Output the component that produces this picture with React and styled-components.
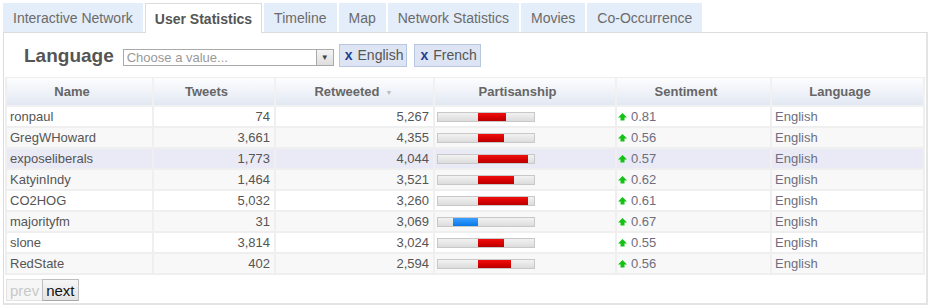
import React from "react";
import styled, { createGlobalStyle } from "styled-components";

const Global = createGlobalStyle`
  html, body { margin: 0; padding: 0; background: #fff; }
  body { font-family: "Liberation Sans", Arial, sans-serif; }
`;

const Page = styled.div`
  padding: 3px 4px 0 3px;
  width: 925px;
`;

const TabBar = styled.div`
  display: flex;
  gap: 2px;
  height: 29px;
`;

const Tab = styled.div`
  box-sizing: border-box;
  padding: 0 9px 0 9px;
  display: flex;
  align-items: center;
  font-size: 14px;
  color: ${(p) => (p.$active ? "#555" : "#6b6b6b")};
  font-weight: ${(p) => (p.$active ? "bold" : "normal")};
  background: ${(p) => (p.$active ? "#fff" : "#e4edfa")};
  border: 1px solid ${(p) => (p.$active ? "#dcdcdc" : "#e4edfa")};
  border-bottom: none;
  position: relative;
  z-index: 1;
  height: ${(p) => (p.$active ? "30px" : "29px")};
`;

const Panel = styled.div`
  border: 1px solid #dcdcdc;
  border-right: 2px solid #e4e4e4;
  border-bottom: 2px solid #e4e4e4;
  height: 273px;
  box-sizing: border-box;
  padding: 0 2px 0 1px;
`;

const FilterRow = styled.div`
  display: flex;
  align-items: center;
  height: 24px;
  margin-top: 10px;
  padding-left: 19px;
`;

const Label = styled.div`
  font-size: 19px;
  font-weight: bold;
  color: #555;
  margin-right: 9px;
  margin-top: 1px;
`;

const Select = styled.div`
  width: 211px;
  height: 17px;
  box-sizing: border-box;
  border: 1px solid #aaa;
  display: flex;
  align-items: center;
  font-size: 13px;
  color: #999;
  margin-top: 4px;
  background: #fff;
`;

const Placeholder = styled.span`
  flex: 1;
  padding-left: 3px;
  white-space: nowrap;
`;

const SelectArrow = styled.span`
  width: 16px;
  height: 15px;
  border-left: 1px solid #aaa;
  background: linear-gradient(#f4f4f4, #dedede);
  display: flex;
  align-items: center;
  justify-content: center;
  font-size: 8px;
  color: #444;
`;

const Chip = styled.div`
  height: 23px;
  box-sizing: border-box;
  display: flex;
  align-items: center;
  padding: 0 3px 0 5px;
  margin-left: ${(p) => p.$ml}px;
  background: #dde5f4;
  border: 1px solid #b8c6e0;
  font-size: 14px;
  color: #555;
`;

const ChipX = styled.span`
  color: #1d3f91;
  font-weight: bold;
  margin-right: 5px;
  font-size: 14px;
`;

const Table = styled.table`
  margin-top: 10px;
  border-collapse: separate;
  border-spacing: 0;
  table-layout: fixed;
  width: 920px;
  font-size: 13px;
  border-top: 1px solid #eeeeee;
  border-left: 2px solid #efefef;
`;

const Th = styled.th`
  height: 27px;
  padding: 0 15px 0 0;
  font-weight: bold;
  color: #666;
  text-align: center;
  background: linear-gradient(#fdfdfe, #e2e8f3);
  border-right: 2px solid #f1f1f1;
  border-bottom: 2px solid #f1f1f1;
`;

const HeadLabel = styled.span`
  position: relative;
`;

const SortArrow = styled.span`
  position: absolute;
  left: 100%;
  top: 50%;
  transform: translateY(-40%);
  margin-left: 6px;
  font-size: 7px;
  color: #bbb;
`;

const Tr = styled.tr`
  background: ${(p) => p.$bg};
`;

const Td = styled.td`
  height: 19px;
  padding: 0 ${(p) => (p.$right ? "4px" : "0")} 0 ${(p) => p.$pl ?? 3}px;
  text-align: ${(p) => (p.$right ? "right" : "left")};
  color: ${(p) => (p.$soft ? "#6e6e80" : "#555")};
  border-right: 2px solid #efefef;
  border-bottom: 2px solid #efefef;
  white-space: nowrap;
  overflow: hidden;
`;

const Track = styled.div`
  position: relative;
  width: 98px;
  height: 10px;
  box-sizing: border-box;
  border: 1px solid #c8c8c8;
  background: linear-gradient(#f2f2f2, #dcdcdc);
  margin-top: 1px;
`;

const Fill = styled.div`
  position: absolute;
  top: 0;
  bottom: 0;
  background: ${(p) =>
    p.$blue
      ? "linear-gradient(#3aa0ff, #0a78e8)"
      : "linear-gradient(#f01010, #d40000 60%, #b80000)"};
`;

const Sent = styled.span`
  display: inline-flex;
  align-items: center;
  gap: 4px;
`;

const Pager = styled.div`
  display: flex;
  margin: 4px 0 0 1px;
`;

const PageBtn = styled.div`
  height: 22px;
  box-sizing: border-box;
  padding: 0 3px;
  display: flex;
  align-items: center;
  font-size: 15px;
  color: ${(p) => (p.$off ? "#c8c8c8" : "#111")};
  background: ${(p) => (p.$off ? "#f6f6f6" : "linear-gradient(#f6f6f6, #e4e4e4)")};
  border: 1px solid ${(p) => (p.$off ? "#e2e2e2" : "#bdbdbd")};
  border-right: ${(p) => (p.$off ? "none" : "1px solid #bdbdbd")};
  border-bottom-color: ${(p) => (p.$off ? "#e2e2e2" : "#a8a8a8")};
`;

const UpArrow = () => (
  <svg width="9" height="8" viewBox="0 0 9 8">
    <path d="M4.5 0 L9 4.5 L6.5 4.5 L6.5 7.5 L2.5 7.5 L2.5 4.5 L0 4.5 Z" fill="#13c213" />
  </svg>
);

const tabs = [
  "Interactive Network",
  "User Statistics",
  "Timeline",
  "Map",
  "Network Statistics",
  "Movies",
  "Co-Occurrence",
];

const cols = [147, 122, 159, 182, 155, 153];
const heads = ["Name", "Tweets", "Retweeted", "Partisanship", "Sentiment", "Language"];

const rows = [
  ["ronpaul", "74", "5,267", 28, "0.81"],
  ["GregWHoward", "3,661", "4,355", 26, "0.56"],
  ["exposeliberals", "1,773", "4,044", 50, "0.57"],
  ["KatyinIndy", "1,464", "3,521", 36, "0.62"],
  ["CO2HOG", "5,032", "3,260", 50, "0.61"],
  ["majorityfm", "31", "3,069", -25, "0.67"],
  ["slone", "3,814", "3,024", 26, "0.55"],
  ["RedState", "402", "2,594", 33, "0.56"],
];

const rowBg = (i) => (i === 2 ? "#e9eaf6" : i % 2 === 0 ? "#fff" : "#f8f8f8");

export default function App() {
  return (
    <>
      <Global />
      <Page>
        <TabBar>
          {tabs.map((t) => (
            <Tab key={t} $active={t === "User Statistics"}>
              {t}
            </Tab>
          ))}
        </TabBar>
        <Panel>
          <FilterRow>
            <Label>Language</Label>
            <Select>
              <Placeholder>Choose a value...</Placeholder>
              <SelectArrow>▼</SelectArrow>
            </Select>
            <Chip $ml={5}>
              <ChipX>x</ChipX>English
            </Chip>
            <Chip $ml={7}>
              <ChipX>x</ChipX>French
            </Chip>
          </FilterRow>
          <Table>
            <colgroup>
              {cols.map((w, i) => (
                <col key={i} style={{ width: w }} />
              ))}
            </colgroup>
            <thead>
              <tr>
                {heads.map((h) => (
                  <Th key={h}>
                    <HeadLabel>
                      {h}
                      {h === "Retweeted" && <SortArrow>▼</SortArrow>}
                    </HeadLabel>
                  </Th>
                ))}
              </tr>
            </thead>
            <tbody>
              {rows.map(([name, tw, rt, p, s], i) => (
                <Tr key={name} $bg={rowBg(i)}>
                  <Td>{name}</Td>
                  <Td $right>{tw}</Td>
                  <Td $right>{rt}</Td>
                  <Td $pl={2}>
                    <Track>
                      <Fill
                        $blue={p < 0}
                        style={
                          p < 0
                            ? { left: 40 + p, width: -p }
                            : { left: 40, width: p }
                        }
                      />
                    </Track>
                  </Td>
                  <Td $soft $pl={1}>
                    <Sent>
                      <UpArrow />
                      {s}
                    </Sent>
                  </Td>
                  <Td $soft>English</Td>
                </Tr>
              ))}
            </tbody>
          </Table>
          <Pager>
            <PageBtn $off>prev</PageBtn>
            <PageBtn>next</PageBtn>
          </Pager>
        </Panel>
      </Page>
    </>
  );
}
